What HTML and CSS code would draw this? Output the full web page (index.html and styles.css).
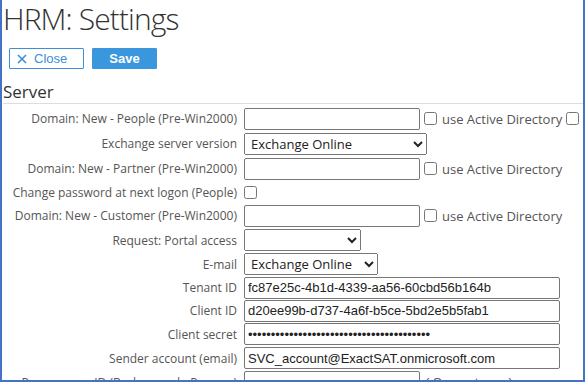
FILE: index.html
```html
<!DOCTYPE html>
<html lang="en">
<head>
  <meta charset="UTF-8">
  <title>HRM: Settings</title>
  <link rel="stylesheet" href="styles.css">
</head>
<body>
  <div class="frame">
    <h1 class="title">HRM: Settings</h1>
    <div class="toolbar">
      <button class="btn btn-close">
        <svg width="10" height="10" viewBox="0 0 10 10"><path d="M1 1 L9 9 M9 1 L1 9" stroke="currentColor" stroke-width="1.6" fill="none"/></svg>
        Close
      </button>
      <button class="btn btn-save">Save</button>
    </div>
    <h2 class="section-title">Server</h2>
    <div class="form">
      <label>Domain: New - People (Pre-Win2000)</label>
      <div class="field">
        <input type="text" class="w-md">
        <input type="checkbox" class="check">
        <span class="hint">use Active Directory</span>
        <input type="checkbox" class="check check-tight">
      </div>

      <label>Exchange server version</label>
      <div class="field">
        <select class="w-sel-lg"><option>Exchange Online</option></select>
      </div>

      <label>Domain: New - Partner (Pre-Win2000)</label>
      <div class="field">
        <input type="text" class="w-md">
        <input type="checkbox" class="check">
        <span class="hint">use Active Directory</span>
      </div>

      <label>Change password at next logon (People)</label>
      <div class="field">
        <input type="checkbox" class="check check-first">
      </div>

      <label>Domain: New - Customer (Pre-Win2000)</label>
      <div class="field">
        <input type="text" class="w-md">
        <input type="checkbox" class="check">
        <span class="hint">use Active Directory</span>
      </div>

      <label>Request: Portal access</label>
      <div class="field">
        <select class="w-sel-sm"><option></option></select>
      </div>

      <label>E-mail</label>
      <div class="field">
        <select class="w-sel-md"><option>Exchange Online</option></select>
      </div>

      <label>Tenant ID</label>
      <div class="field">
        <input type="text" class="w-lg" value="fc87e25c-4b1d-4339-aa56-60cbd56b164b">
      </div>

      <label>Client ID</label>
      <div class="field">
        <input type="text" class="w-lg" value="d20ee99b-d737-4a6f-b5ce-5bd2e5b5fab1">
      </div>

      <label>Client secret</label>
      <div class="field">
        <input type="password" class="w-lg" value="0123456789012345678901234567890123456789">
      </div>

      <label>Sender account (email)</label>
      <div class="field">
        <input type="text" class="w-lg" value="SVC_account@ExactSAT.onmicrosoft.com">
      </div>

      <label>Programme: ID (Background - Process)</label>
      <div class="field">
        <input type="text" class="w-md">
        <span class="note">( Separator = ;)</span>
      </div>
    </div>
  </div>
</body>
</html>
```

FILE: styles.css
```css
body {
  margin: 0;
  font-family: "Open Sans", sans-serif;
  color: #333;
  background: #fff;
}
.frame {
  width: 585px;
  height: 382px;
  box-sizing: border-box;
  border: 2px solid #4472c4;
  border-top: none;
  padding-left: 1px;
  overflow: hidden;
}
.title {
  margin: 0;
  font-family: "Open Sans Light", "Open Sans", sans-serif;
  font-size: 30px;
  line-height: 37px;
  font-weight: 300;
  letter-spacing: -0.9px;
  color: #333;
}
.toolbar {
  display: flex;
  gap: 8px;
  margin: 11px 0 0 6px;
}
.btn {
  height: 21px;
  box-sizing: border-box;
  border: 1px solid #3b8fdb;
  border-radius: 1px;
  font-family: "Liberation Sans", Arial, sans-serif;
  font-size: 13px;
  padding: 0;
  cursor: pointer;
}
.btn-close {
  width: 75px;
  background: #fff;
  color: #3b8fdb;
  display: flex;
  align-items: center;
  gap: 7px;
  padding-left: 7px;
}
.btn-save {
  width: 65px;
  background: #3b97dd;
  border-color: #3b97dd;
  color: #fff;
  font-weight: bold;
}
.section-title {
  margin: 12px 0 0 0;
  font-size: 17px;
  line-height: 22px;
  font-weight: normal;
  color: #333;
  padding-bottom: 0;
  border-bottom: 1px solid #ddd;
}
.form {
  display: grid;
  grid-template-columns: 234px 1fr;
  grid-template-rows: 25px 25px 25px 22px 25px 24px 24px 23px 23px 24px 24px 24px;
  column-gap: 7px;
  margin-top: 2px;
}
.form label {
  text-align: right;
  font-size: 12px;
  color: #555;
  align-self: center;
  white-space: nowrap;
}
.field {
  display: flex;
  align-items: center;
  white-space: nowrap;
}
input[type="text"], input[type="password"] {
  height: 22px;
  box-sizing: border-box;
  border: 1px solid #767676;
  border-radius: 2px;
  padding: 0 3px;
  font-family: "Liberation Sans", Arial, sans-serif;
  font-size: 13px;
  color: #222;
}
select {
  height: 22px;
  box-sizing: border-box;
  font-family: "Open Sans", sans-serif;
  font-size: 13px;
  color: #222;
  padding: 0 2px;
}
.w-md { width: 176px; }
.w-lg { width: 316px; }
.w-sel-lg { width: 183px; }
.w-sel-md { width: 134px; }
.w-sel-sm { width: 117px; }
.check {
  width: 13px;
  height: 13px;
  margin: 0 5px 0 4px;
}
.check-tight { margin: 0 0 0 4px; }
.check-first { margin-left: 0; }
.hint {
  font-size: 13px;
  color: #555;
}
.note {
  font-family: "Liberation Sans", Arial, sans-serif;
  font-size: 13px;
  color: #555;
  margin-left: 5px;
}
```
